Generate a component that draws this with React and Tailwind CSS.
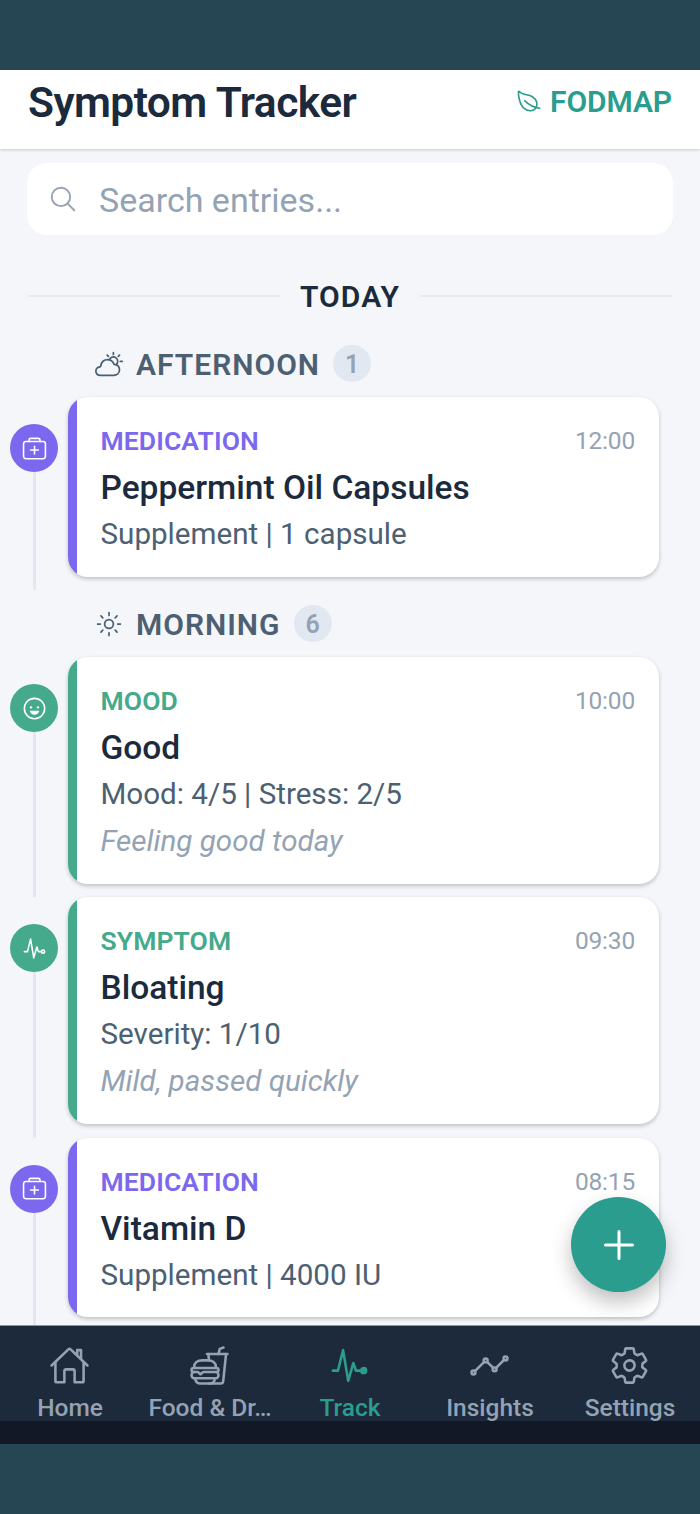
import {
  IoAdd,
  IoAnalyticsOutline,
  IoFastFoodOutline,
  IoHappyOutline,
  IoHomeOutline,
  IoLeafOutline,
  IoMedkitOutline,
  IoPartlySunnyOutline,
  IoPulse,
  IoPulseOutline,
  IoSearchOutline,
  IoSettingsOutline,
  IoSunnyOutline,
} from 'react-icons/io5';

const TYPES = {
  medication: {
    label: 'MEDICATION',
    icon: IoMedkitOutline,
    bg: 'bg-[#7b68ee]',
    text: 'text-[#7b68ee]',
  },
  mood: {
    label: 'MOOD',
    icon: IoHappyOutline,
    bg: 'bg-[#44aa8b]',
    text: 'text-[#44aa8b]',
  },
  symptom: {
    label: 'SYMPTOM',
    icon: IoPulseOutline,
    bg: 'bg-[#44aa8b]',
    text: 'text-[#44aa8b]',
  },
};

const GROUPS = [
  {
    id: 'afternoon',
    title: 'AFTERNOON',
    icon: IoPartlySunnyOutline,
    count: 1,
    entries: [
      { id: 1, type: 'medication', time: '12:00', title: 'Peppermint Oil Capsules', details: 'Supplement | 1 capsule' },
    ],
  },
  {
    id: 'morning',
    title: 'MORNING',
    icon: IoSunnyOutline,
    count: 6,
    entries: [
      { id: 2, type: 'mood', time: '10:00', title: 'Good', details: 'Mood: 4/5 | Stress: 2/5', note: 'Feeling good today' },
      { id: 3, type: 'symptom', time: '09:30', title: 'Bloating', details: 'Severity: 1/10', note: 'Mild, passed quickly' },
      { id: 4, type: 'medication', time: '08:15', title: 'Vitamin D', details: 'Supplement | 4000 IU' },
    ],
  },
];

const TABS = [
  { id: 'home', label: 'Home', icon: IoHomeOutline },
  { id: 'food', label: 'Food & Dr…', icon: IoFastFoodOutline },
  { id: 'track', label: 'Track', icon: IoPulse },
  { id: 'insights', label: 'Insights', icon: IoAnalyticsOutline },
  { id: 'settings', label: 'Settings', icon: IoSettingsOutline },
];

function Entry({ entry }) {
  const type = TYPES[entry.type];
  const Icon = type.icon;

  return (
    <div className="flex">
      <div className="flex w-[68px] shrink-0 flex-col items-center pt-[27px]">
        <div className={`flex size-12 shrink-0 items-center justify-center rounded-full text-white ${type.bg}`}>
          <Icon size={25} />
        </div>
        <div className="w-[3px] flex-1 bg-[#e1e8f1]" />
      </div>
      <article className="mb-[13.7px] flex w-[591px] overflow-hidden rounded-[20px] bg-white shadow-[0_2px_4px_rgba(0,0,0,0.22)]">
        <div className={`w-[9px] shrink-0 ${type.bg}`} />
        <div className="min-w-0 flex-1 pt-5 pr-6 pb-[18.5px] pl-[23.5px] leading-[47px] whitespace-nowrap">
          <div className="flex h-[47px] justify-between">
            <span className={`text-[26.5px] font-semibold tracking-[0.1px] ${type.text}`}>{type.label}</span>
            <span className="text-[24.5px] tracking-[-0.2px] text-[#94a3b3]">{entry.time}</span>
          </div>
          <h3 className="h-[47px] text-[33.5px] font-medium text-[#1b2a3d]">{entry.title}</h3>
          <p className="h-[47px] text-[29.6px] text-[#4c6072]">{entry.details}</p>
          {entry.note && <p className="h-[47px] text-[29.6px] text-[#94a3b3] italic">{entry.note}</p>}
        </div>
      </article>
    </div>
  );
}

function Group({ group }) {
  const Icon = group.icon;

  return (
    <section>
      <div className="flex h-[67px] items-center pl-[95px] text-[#4c6072]">
        <Icon size={28} className="shrink-0" />
        <h2 className="ml-[13px] pt-px text-[30px] font-semibold tracking-[1px]">{group.title}</h2>
        <span className="ml-[13px] flex h-[37px] w-[38px] items-center justify-center rounded-full bg-[#e1e8f1] pt-0.5 text-[25px] font-semibold text-[#94a3b3]">
          {group.count}
        </span>
      </div>
      {group.entries.map((entry) => (
        <Entry key={entry.id} entry={entry} />
      ))}
    </section>
  );
}

export default function App() {
  const activeTab = 'track';

  return (
    <div className="relative flex h-[1514px] w-[700px] flex-col overflow-hidden bg-[#264653] py-[70px] font-[Roboto,sans-serif]">
      <header className="z-10 flex h-[79px] shrink-0 items-start justify-between bg-white px-7 shadow-[0_1px_3px_rgba(0,0,0,0.18)]">
        <h1 className="mt-[2px] text-[42.5px] leading-[62px] font-semibold tracking-[-0.55px] text-[#1b2a3d]">
          Symptom Tracker
        </h1>
        <div className="mt-2 flex items-center gap-2 text-[#2a9d8f]">
          <IoLeafOutline size={26} className="mb-[3px]" />
          <span className="text-[30px] leading-[48px] font-semibold tracking-[-0.1px]">FODMAP</span>
        </div>
      </header>

      <main className="min-h-0 flex-1 overflow-hidden bg-[#f4f6fa]">
        <div className="mx-[27px] mt-3.5 flex h-[72px] items-center rounded-[20px] bg-white pl-[21px] text-[#94a3b3]">
          <IoSearchOutline size={30} />
          <span className="ml-[21px] pt-0.5 text-[34px]">Search entries...</span>
        </div>

        <div className="mx-7 mt-[38px] flex h-[46px] items-center gap-5">
          <div className="h-0.5 flex-1 bg-[#e6eaef]" />
          <span className="pt-px text-[30px] font-semibold tracking-[1.1px] text-[#1b2a3d]">TODAY</span>
          <div className="h-0.5 flex-1 bg-[#e6eaef]" />
        </div>

        <div className="mt-[11px]">
          {GROUPS.map((group) => (
            <Group key={group.id} group={group} />
          ))}
        </div>
      </main>

      <button
        type="button"
        aria-label="Add entry"
        className="absolute right-[34px] bottom-[222px] flex size-[95px] items-center justify-center rounded-full bg-[#2a9d8f] text-white shadow-[0_10px_20px_rgba(0,0,0,0.25)]"
      >
        <IoAdd size={48} />
      </button>

      <nav className="z-10 grid h-24 shrink-0 grid-cols-5 border-t border-[#8a97a3] bg-[#1d2a3b]">
        {TABS.map((tab) => {
          const Icon = tab.icon;
          return (
            <div
              key={tab.id}
              className={`flex flex-col items-center pt-[19px] ${
                tab.id === activeTab ? 'text-[#2a9d8f]' : 'text-[#94a3b3]'
              }`}
            >
              <Icon size={41} className="mr-px shrink-0" />
              <span className="text-[24.5px] leading-[44px] font-medium whitespace-nowrap">{tab.label}</span>
            </div>
          );
        })}
      </nav>
      <div className="h-[23px] shrink-0 bg-[#121826]" />
    </div>
  );
}
